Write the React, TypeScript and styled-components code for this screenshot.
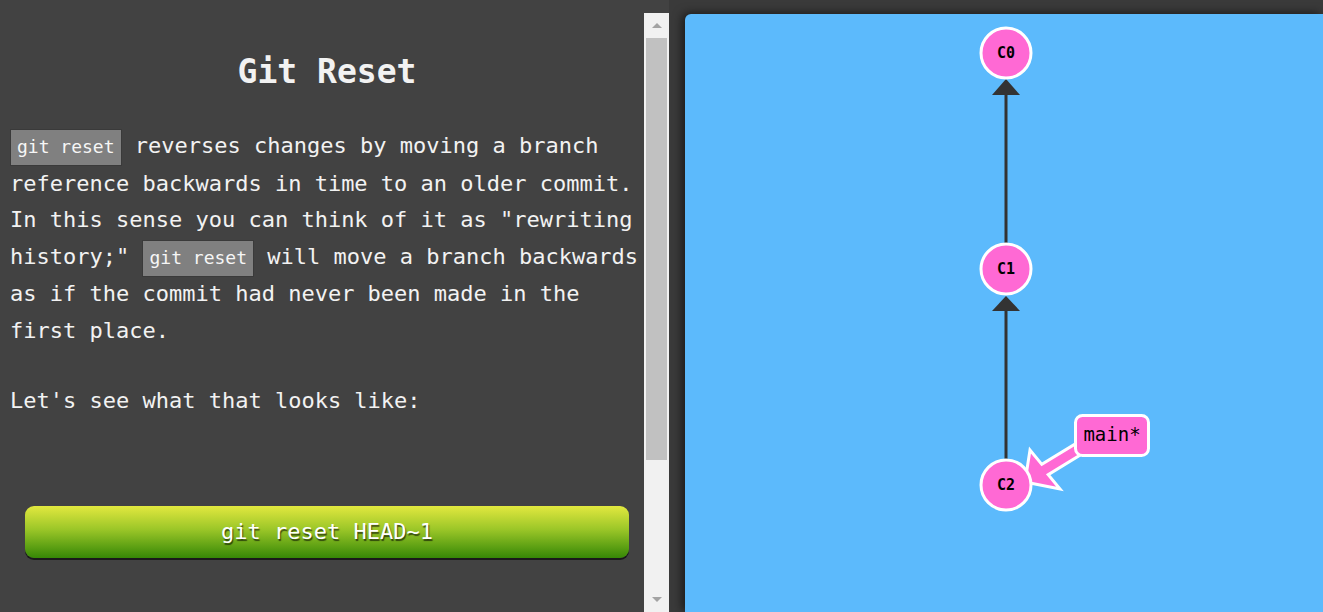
import React from 'react';
import styled, { createGlobalStyle } from 'styled-components';

const GlobalStyle = createGlobalStyle`
  html, body {
    margin: 0;
    padding: 0;
    background: #424242;
    overflow: hidden;
  }
`;

const mono = `'DejaVu Sans Mono', 'Liberation Mono', monospace`;

const Page = styled.div`
  display: flex;
  width: 100%;
  height: 100vh;
`;

const LeftColumn = styled.div`
  width: 669px;
  flex-shrink: 0;
  display: flex;
  flex-direction: column;
  padding-top: 13px;
  box-sizing: border-box;
  background: #424242;
`;

const ScrollArea = styled.div`
  flex: 1;
  display: flex;
  min-height: 0;
`;

const Content = styled.div`
  width: 644px;
  box-sizing: border-box;
  padding: 0 4px 0 10px;
  color: #f2f2f2;
  font-family: ${mono};
  font-size: 22px;
  line-height: 36.5px;
`;

const Title = styled.h2`
  margin: 39px 0 36px;
  padding-left: 4px;
  font-size: 33px;
  line-height: 40px;
  text-align: center;
  font-weight: bold;
`;

const Paragraph = styled.p`
  margin: 0 0 34px;
`;

const Code = styled.code`
  font-family: ${mono};
  font-size: 18px;
  background: #808080;
  border: 1px solid #3a3a3a;
  color: #f6f6f6;
  padding: 6px 6px 8px;
`;

const ButtonRow = styled.div`
  padding: 52px 11px 0 15px;
`;

const CommandButton = styled.button`
  width: 100%;
  height: 52px;
  border: none;
  border-radius: 9px;
  background: linear-gradient(to bottom, #e2e83f 0%, #9bc628 45%, #368806 100%);
  box-shadow: 0 2px 0 #1a1a1a;
  color: #fff;
  font-family: ${mono};
  font-size: 22px;
  text-shadow: 1px 2px 1px rgba(0, 0, 0, 0.6);
  cursor: pointer;
`;

const Scrollbar = styled.div`
  width: 25px;
  flex-shrink: 0;
  background: #f1f1f1;
  display: flex;
  flex-direction: column;
  align-items: center;
`;

const ScrollArrow = styled.div<{ $down?: boolean }>`
  height: 25px;
  width: 100%;
  display: flex;
  align-items: center;
  justify-content: center;
  &::after {
    content: '';
    width: 0;
    height: 0;
    border-left: 5px solid transparent;
    border-right: 5px solid transparent;
    ${(p) => (p.$down ? 'border-top: 5px solid #a3a3a3;' : 'border-bottom: 5px solid #a3a3a3;')}
  }
`;

const Thumb = styled.div`
  width: 21px;
  height: 422px;
  background: #c1c1c1;
`;

const Track = styled.div`
  flex: 1;
`;

const RightColumn = styled.div`
  flex: 1;
  padding: 14px 0 0 16px;
  background: #3a3a3a;
  display: flex;
`;

const Visual = styled.div`
  position: relative;
  flex: 1;
  background: #5cbafc;
  border-top-left-radius: 6px;
  box-shadow: -3px -1px 10px rgba(0, 0, 0, 0.55);
`;

const GraphSvg = styled.svg`
  position: absolute;
  inset: 0;
  width: 100%;
  height: 100%;
`;

const commits = [
  { id: 'C0', y: 39 },
  { id: 'C1', y: 255 },
  { id: 'C2', y: 471 },
];

const CX = 321;
const R = 25;

function Graph() {
  return (
    <GraphSvg>
      {/* parent links */}
      <line x1={CX} y1={80} x2={CX} y2={230} stroke="#333" strokeWidth={3} />
      <polygon points={`${CX},65 ${CX - 14},81 ${CX + 14},81`} fill="#333" />
      <line x1={CX} y1={296} x2={CX} y2={446} stroke="#333" strokeWidth={3} />
      <polygon points={`${CX},282 ${CX - 14},297 ${CX + 14},297`} fill="#333" />

      {/* branch arrow */}
      <polygon
        points="340,468 345,436 356.8,450.4 406.8,419.9 413.2,430.1 363.2,460.6 375,475"
        fill="#ff69d4"
        stroke="#fff"
        strokeWidth={3}
      />

      {commits.map((c) => (
        <g key={c.id}>
          <circle cx={CX} cy={c.y} r={R} fill="#ff69d4" stroke="#fff" strokeWidth={3} />
          <text
            x={CX}
            y={c.y + 5}
            textAnchor="middle"
            fontFamily="DejaVu Sans Mono, monospace"
            fontWeight="bold"
            fontSize={15}
            fill="#000"
          >
            {c.id}
          </text>
        </g>
      ))}

      <rect x={390.5} y={401.5} width={73} height={40} rx={7} fill="#ff69d4" stroke="#fff" strokeWidth={3} />
      <text
        x={427}
        y={427}
        textAnchor="middle"
        fontFamily="DejaVu Sans Mono, monospace"
        fontSize={19}
        fill="#000"
      >
        main*
      </text>
    </GraphSvg>
  );
}

export default function App() {
  return (
    <>
      <GlobalStyle />
      <Page>
        <LeftColumn>
          <ScrollArea>
            <Content>
              <Title>Git Reset</Title>
              <Paragraph>
                <Code>git reset</Code> reverses changes by moving a branch reference backwards in time to an
                older commit. In this sense you can think of it as "rewriting history;" <Code>git reset</Code> will
                move a branch backwards as if the commit had never been made in the first place.
              </Paragraph>
              <Paragraph>Let's see what that looks like:</Paragraph>
              <ButtonRow>
                <CommandButton>git reset HEAD~1</CommandButton>
              </ButtonRow>
            </Content>
            <Scrollbar>
              <ScrollArrow />
              <Thumb />
              <Track />
              <ScrollArrow $down />
            </Scrollbar>
          </ScrollArea>
        </LeftColumn>
        <RightColumn>
          <Visual>
            <Graph />
          </Visual>
        </RightColumn>
      </Page>
    </>
  );
}
